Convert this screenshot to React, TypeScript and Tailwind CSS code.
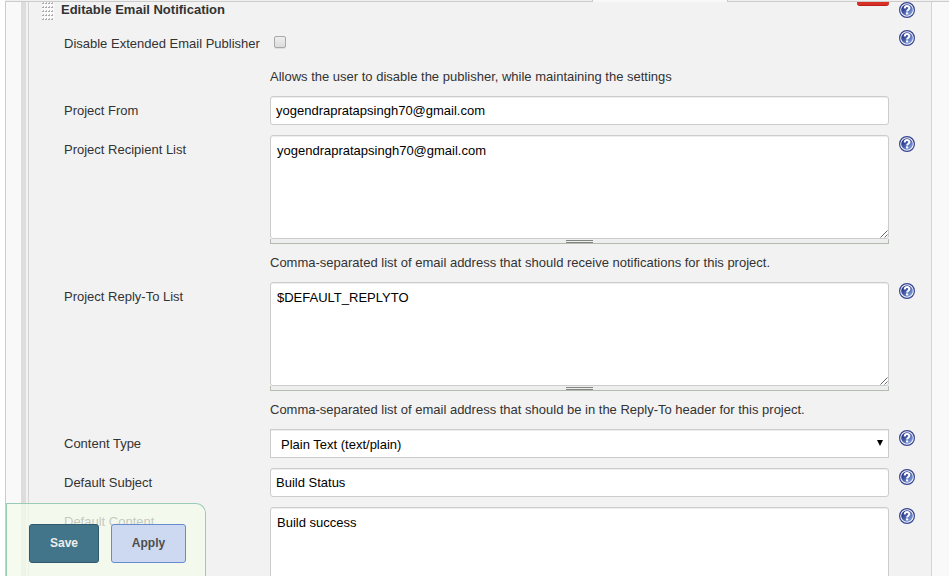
import type { ReactNode } from "react";

function HelpButton({ label }: { label: string }) {
  return (
    <button type="button" aria-label={`Help for ${label}`} className="block size-4 shrink-0">
      <svg viewBox="0 0 16 16" className="size-4" aria-hidden="true">
        <defs>
          <linearGradient id="helpFill" x1="0" y1="0" x2="1" y2="1">
            <stop offset="0.25" stopColor="#293a8c" />
            <stop offset="0.9" stopColor="#86a4de" />
          </linearGradient>
        </defs>
        <circle cx="8" cy="8" r="7.4" fill="#f4f6fc" stroke="#35438f" strokeWidth="1.2" />
        <circle cx="8" cy="8" r="5.8" fill="url(#helpFill)" />
        <path d="M5.7 6.4C5.7 3.4 10.4 3.4 10.4 6.1C10.4 7.8 8.1 7.7 8.1 9.6" fill="none" stroke="#fff" strokeWidth="2" />
        <rect x="7" y="10.4" width="2.2" height="2" fill="#fff" />
      </svg>
    </button>
  );
}

function DragHandle() {
  return (
    <svg viewBox="0 0 12 18" className="h-[18px] w-3" shapeRendering="crispEdges" aria-hidden="true">
      <defs>
        <pattern id="gripDots" width="3" height="4" patternUnits="userSpaceOnUse">
          <rect width="3" height="4" fill="#fafafa" />
          <rect x="1" y="0" width="1" height="1" fill="#bbb" />
          <rect x="0" y="1" width="2" height="1" fill="#aaa" />
        </pattern>
      </defs>
      <rect width="12" height="18" fill="url(#gripDots)" />
    </svg>
  );
}

function Row({ label, id, help = true, children }: { label: string; id: string; help?: boolean; children: ReactNode }) {
  return (
    <div className="flex items-start">
      <label htmlFor={id} className="w-[206px] shrink-0 pt-[5px] leading-5">
        {label}
      </label>
      <div className="min-w-0 flex-1">{children}</div>
      <div className="ml-[10px] w-8 shrink-0 pt-px">{help && <HelpButton label={label} />}</div>
    </div>
  );
}

const box = "block w-full border border-[#ccc] bg-white text-black shadow-[inset_0_1px_1px_rgba(0,0,0,0.075)] outline-none";

function TextInput({ id, value }: { id: string; value: string }) {
  return <input id={id} type="text" defaultValue={value} className={`${box} h-[29px] rounded-[3px] px-[5px]`} />;
}

function TextArea({ id, value }: { id: string; value: string }) {
  return <textarea id={id} defaultValue={value} className={`${box} h-[104px] resize-none rounded-[3px] px-[6px] py-[5px] leading-5`} />;
}

function ResizableArea({ id, value }: { id: string; value: string }) {
  return (
    <>
      <div className="relative">
        <TextArea id={id} value={value} />
        <svg viewBox="0 0 8 8" className="absolute right-px bottom-px size-2" aria-hidden="true">
          <path d="M0.5 7.5L7.5 0.5M4.5 7.5L7.5 4.5" stroke="#555" strokeWidth="0.9" fill="none" />
        </svg>
      </div>
      <div className="flex h-[5px] justify-center border border-t-0 border-[#b4bbb0] bg-[#eee]">
        <div className="mt-px h-[3px] w-[27px] border-y border-[#808580]" />
      </div>
    </>
  );
}

export default function App() {
  return (
    <div className="flex h-screen flex-col overflow-hidden bg-white font-['Liberation_Sans',Arial,sans-serif] text-[13px] text-[#333]">
      <div className="ml-[5px] flex h-[2px] shrink-0">
        <div className="w-[588px] border-r border-b border-[#ccc] bg-[#f0f0f0]" />
        <div className="w-[134px] bg-[#f8f8f8]" />
        <div className="flex-1 border-b border-l border-[#ccc] bg-[#f0f0f0]" />
      </div>
      <main className="ml-[5px] flex min-h-0 flex-1 border-l border-[#ccc] bg-[#f9f9f9] pr-[17px] pl-[15px]">
        <div className="w-[5px] shrink-0 bg-[#ddd]" />
        <div className="w-[2px] shrink-0 bg-[#f2f2f2]" />
        <form className="min-w-0 flex-1 border-x border-[#d4d4d4] bg-[#f2f2f2]" onSubmit={(e) => e.preventDefault()}>
          <div className="flex h-7 items-start pl-[13px]">
            <DragHandle />
            <h2 className="ml-[7px] flex-1 leading-4 font-bold">Editable Email Notification</h2>
            <button type="button" aria-label="Delete" className="mr-[10px] h-1 w-8 rounded-b-[3px] border-b border-[#b8201c] bg-[#d93025]" />
            <div className="w-8">
              <HelpButton label="Editable Email Notification" />
            </div>
          </div>
          <div className="pl-[35px]">
            <div className="flex h-[66px] items-start">
              <label htmlFor="disable" className="w-[206px] shrink-0 pt-1 leading-5">
                Disable Extended Email Publisher
              </label>
              <div className="flex-1">
                <input
                  id="disable"
                  type="checkbox"
                  className="mt-[6px] ml-1 block size-3 appearance-none rounded-[2px] border border-[#a8a8a8] bg-linear-to-b from-[#eee] to-[#dcdcdc] shadow-[0_1px_0_rgba(0,0,0,0.08)]"
                />
                <p className="mt-[19px] leading-5">Allows the user to disable the publisher, while maintaining the settings</p>
              </div>
              <div className="ml-[10px] w-8 shrink-0">
                <HelpButton label="Disable Extended Email Publisher" />
              </div>
            </div>
            <div className="flex flex-col gap-[10px]">
              <Row label="Project From" id="from" help={false}>
                <TextInput id="from" value="yogendrapratapsingh70@gmail.com" />
              </Row>
              <Row label="Project Recipient List" id="recipients">
                <ResizableArea id="recipients" value="yogendrapratapsingh70@gmail.com" />
                <p className="pt-[10px] leading-[18px]">Comma-separated list of email address that should receive notifications for this project.</p>
              </Row>
              <Row label="Project Reply-To List" id="reply">
                <ResizableArea id="reply" value="$DEFAULT_REPLYTO" />
                <p className="pt-[10px] leading-[18px]">Comma-separated list of email address that should be in the Reply-To header for this project.</p>
              </Row>
              <Row label="Content Type" id="type">
                <div className="relative">
                  <select id="type" className={`${box} h-[29px] appearance-none px-[10px] pt-[2px]`}>
                    <option>Plain Text (text/plain)</option>
                  </select>
                  <svg viewBox="0 0 6 6" className="pointer-events-none absolute top-[11px] right-[6px] size-[6px]" aria-hidden="true">
                    <path d="M0 0H6L3 6Z" fill="#000" />
                  </svg>
                </div>
              </Row>
              <Row label="Default Subject" id="subject">
                <TextInput id="subject" value="Build Status" />
              </Row>
              <Row label="Default Content" id="content">
                <TextArea id="content" value="Build success" />
              </Row>
            </div>
          </div>
        </form>
      </main>
      <div className="fixed bottom-0 left-[6px] flex h-[73px] w-[200px] gap-3 rounded-tr-[10px] border border-b-0 border-[#9bcbb5] bg-[#f4fbec]/75 pt-5 pl-[22px] text-[12px] font-bold">
        <button type="button" className="h-[39px] w-[70px] rounded-[3px] border border-[#2f5a6d] bg-[#43758a] pb-[2px] text-[#eee]">
          Save
        </button>
        <button type="button" className="h-[39px] w-[75px] rounded-[3px] border border-[#668bd0] bg-[#cdd9f0] pb-[2px] text-[#4d4d4d]">
          Apply
        </button>
      </div>
    </div>
  );
}
